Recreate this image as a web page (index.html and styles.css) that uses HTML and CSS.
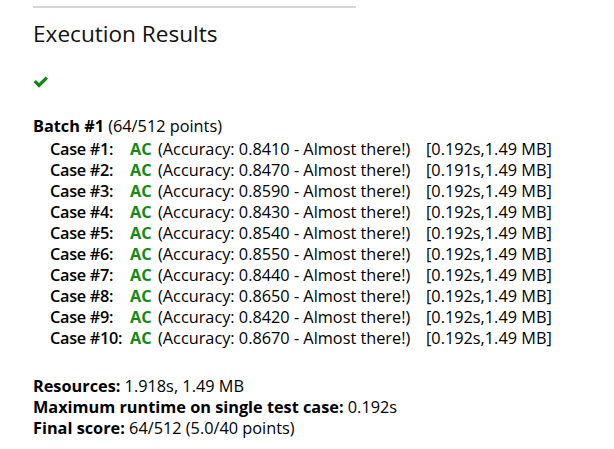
FILE: index.html
```html
<!DOCTYPE html>
<html>
<head>
<meta charset="utf-8">
<link rel="stylesheet" href="styles.css">
</head>
<body>
<div class="page">
  <hr class="rule">
  <h2 class="title">Execution Results</h2>
  <div class="status">
    <svg class="check" viewBox="0 0 16 13" width="16" height="14"><path d="M0.6 6.8 L2.9 4.5 L6 7.6 L12.7 0.9 L15 3.2 L6 12.2 Z" fill="#0f8a0f"/></svg>
  </div>
  <div class="batch"><b>Batch #1</b> (64/512 points)</div>
  <table class="cases">
    <tr><td class="case">Case #1:</td><td class="ac">AC</td><td class="acc">(Accuracy: 0.8410 - Almost there!)</td><td class="res">[0.192s,1.49 MB]</td></tr>
    <tr><td class="case">Case #2:</td><td class="ac">AC</td><td class="acc">(Accuracy: 0.8470 - Almost there!)</td><td class="res">[0.191s,1.49 MB]</td></tr>
    <tr><td class="case">Case #3:</td><td class="ac">AC</td><td class="acc">(Accuracy: 0.8590 - Almost there!)</td><td class="res">[0.192s,1.49 MB]</td></tr>
    <tr><td class="case">Case #4:</td><td class="ac">AC</td><td class="acc">(Accuracy: 0.8430 - Almost there!)</td><td class="res">[0.192s,1.49 MB]</td></tr>
    <tr><td class="case">Case #5:</td><td class="ac">AC</td><td class="acc">(Accuracy: 0.8540 - Almost there!)</td><td class="res">[0.192s,1.49 MB]</td></tr>
    <tr><td class="case">Case #6:</td><td class="ac">AC</td><td class="acc">(Accuracy: 0.8550 - Almost there!)</td><td class="res">[0.192s,1.49 MB]</td></tr>
    <tr><td class="case">Case #7:</td><td class="ac">AC</td><td class="acc">(Accuracy: 0.8440 - Almost there!)</td><td class="res">[0.192s,1.49 MB]</td></tr>
    <tr><td class="case">Case #8:</td><td class="ac">AC</td><td class="acc">(Accuracy: 0.8650 - Almost there!)</td><td class="res">[0.192s,1.49 MB]</td></tr>
    <tr><td class="case">Case #9:</td><td class="ac">AC</td><td class="acc">(Accuracy: 0.8420 - Almost there!)</td><td class="res">[0.192s,1.49 MB]</td></tr>
    <tr><td class="case">Case #10:</td><td class="ac">AC</td><td class="acc">(Accuracy: 0.8670 - Almost there!)</td><td class="res">[0.192s,1.49 MB]</td></tr>
  </table>
  <div class="summary">
    <div><b>Resources:</b> 1.918s, 1.49 MB</div>
    <div><b>Maximum runtime on single test case:</b> 0.192s</div>
    <div><b>Final score:</b> 64/512 (5.0/40 points)</div>
  </div>
</div>
</body>
</html>
```
FILE: styles.css
```css
html, body {
  margin: 0;
  padding: 0;
  background: #fff;
}
body {
  font-family: "Open Sans", "Noto Sans", sans-serif;
  font-size: 16.3px;
  color: #000;
}
.page {
  padding: 0 0 0 33px;
}
.rule {
  margin: 6px 0 0 0;
  width: 323px;
  border: 0;
  border-top: 2px solid #d6d6d6;
  height: 0;
}
.title {
  margin: 10px 0 0 0;
  font-weight: 400;
  font-size: 22.6px;
  line-height: 32px;
  color: #111;
}
.status {
  margin-top: 25px;
  height: 14px;
  display: flex;
}
.check {
  display: block;
}
.batch {
  margin-top: 27px;
  line-height: 21px;
}
.cases {
  margin-top: 2px;
  margin-left: 17px;
  border-collapse: collapse;
}
.cases td {
  padding: 0;
  line-height: 21px;
  white-space: nowrap;
}
.case {
  font-weight: 600;
  width: 80px;
  letter-spacing: -0.3px;
}
.ac {
  font-weight: 700;
  color: #138a13;
  width: 28px;
}
.acc {
  width: 268px;
}
.summary {
  margin-top: 27px;
  line-height: 21px;
}
.summary b {
  font-weight: 700;
}
```
